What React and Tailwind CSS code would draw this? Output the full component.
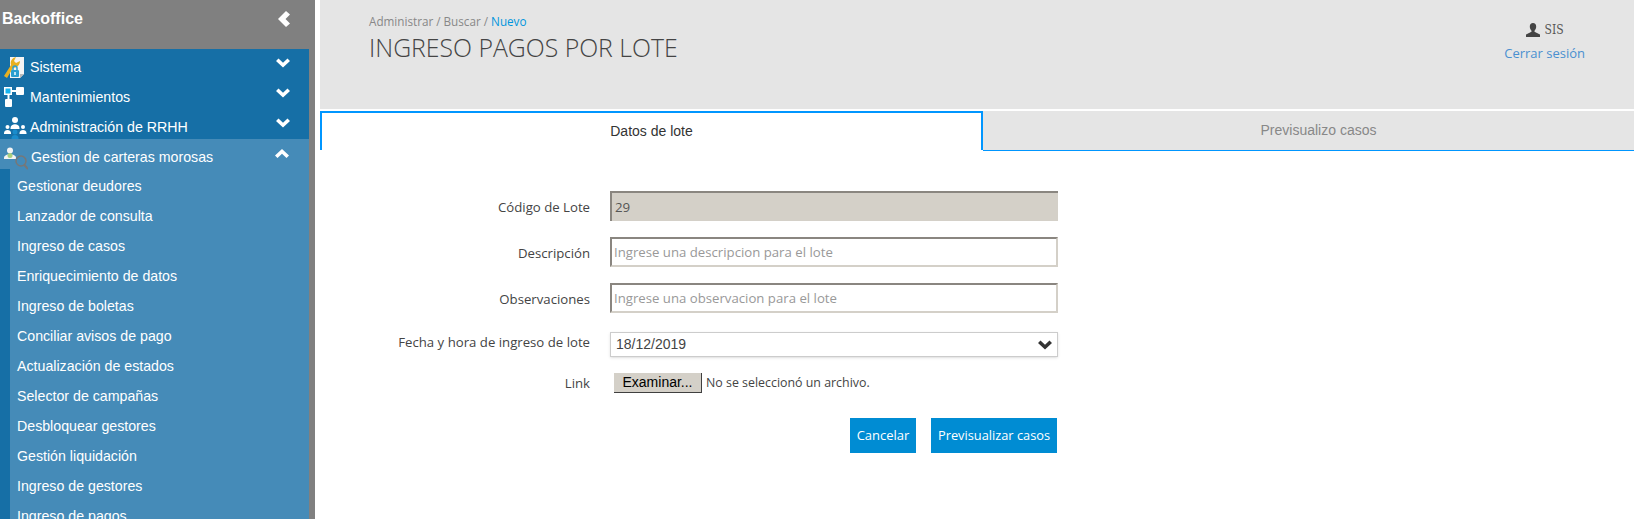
import React from 'react';

const modules = [
  { name: 'Sistema', icon: 'sistema' },
  { name: 'Mantenimientos', icon: 'mant' },
  { name: 'Administración de RRHH', icon: 'rrhh' },
];

const subItems = [
  'Gestionar deudores',
  'Lanzador de consulta',
  'Ingreso de casos',
  'Enriquecimiento de datos',
  'Ingreso de boletas',
  'Conciliar avisos de pago',
  'Actualización de estados',
  'Selector de campañas',
  'Desbloquear gestores',
  'Gestión liquidación',
  'Ingreso de gestores',
  'Ingreso de pagos',
];

function Chevron({ up, className }) {
  return (
    <svg viewBox="0 0 14 10" className={className} fill="currentColor">
      {up ? <path d="M7 0 14 6.5 11.5 9 7 4.8 2.5 9 0 6.5Z" /> : <path d="M7 9.5 0 3 2.5.5 7 4.7 11.5.5 14 3Z" />}
    </svg>
  );
}

function ModuleIcon({ type }) {
  if (type === 'sistema') {
    return (
      <svg viewBox="0 0 20 22" className="w-[20px] h-[22px]">
        <path d="M6 0h14v17l-4 4H6Z" fill="#f4f4f4" />
        <path d="M16 21l4-4h-4Z" fill="#b8b8b8" />
        <path d="M0 19 7 8C6 4 8 1 12 0L10 4l2 2 4-2c0 4-3 7-7 7L3 21Z" fill="#e8b020" />
        <rect x="7" y="13" width="8" height="7" rx="1" fill="#2a9fd0" />
        <path d="M9 13v-2a2 2 0 0 1 4 0v2" fill="none" stroke="#2a9fd0" strokeWidth="1.5" />
        <rect x="10" y="15" width="2" height="3" fill="#bfe6f5" />
      </svg>
    );
  }
  if (type === 'mant') {
    return (
      <svg viewBox="0 0 20 20" className="w-[20px] h-[20px]">
        <path d="M8 4h5M4.5 8v5" stroke="#fff" strokeWidth="2" />
        <rect x="0" y="0" width="8" height="8" fill="#fff" />
        <rect x="1.5" y="1.5" width="5" height="5" fill="#18b4ee" />
        <rect x="12" y="0" width="8" height="8" rx="1" fill="#fff" />
        <rect x="1" y="12" width="7" height="8" rx="1" fill="#fff" />
      </svg>
    );
  }
  if (type === 'rrhh') {
    return (
      <svg viewBox="0 0 23 22" className="w-[23px] h-[22px]">
        <circle cx="11" cy="3" r="3" fill="#fff" />
        <path d="M6.5 11c0-5 9-5 9 0v1h-9Z" fill="#fff" />
        <circle cx="3.5" cy="10" r="2" fill="#fff" />
        <path d="M0 16c0-4 7-4 7 0v1H0Z" fill="#fff" />
        <circle cx="19" cy="10" r="2" fill="#fff" />
        <path d="M15.5 16c0-4 7-4 7 0v1h-7Z" fill="#fff" />
        <circle cx="11" cy="15" r="2.5" fill="#1a8ccc" />
        <path d="M7.5 21c0-4 7-4 7 0v1h-7Z" fill="#1a8ccc" />
      </svg>
    );
  }
  return (
    <svg viewBox="0 0 24 23" className="w-[24px] h-[23px]">
      <circle cx="6" cy="3.5" r="3" fill="#f4f4f4" />
      <path d="M0 11c0-5 12-5 12 0v1H0Z" fill="#f4f4f4" />
      <circle cx="6" cy="8.5" r="2.5" fill="#a8d080" />
      <circle cx="17" cy="14" r="5" fill="none" stroke="#777" strokeWidth="1.5" />
      <path d="M20.5 18l3.5 4" stroke="#777" strokeWidth="2" />
    </svg>
  );
}

function Sidebar() {
  return (
    <aside className="w-[315px] shrink-0 h-[519px] bg-[#808080] overflow-hidden font-['Liberation_Sans',sans-serif] text-white">
      <div className="h-[49px] flex items-start justify-between pl-[2px] pr-[25px] pt-[8px]">
        <span className="text-[16px] font-bold leading-[21px]">Backoffice</span>
        <svg viewBox="0 0 12 16" className="w-[12px] h-[18px] mt-[2px]" fill="#fff">
          <path d="M0 8 8 0l4 3.5L7.5 8l4.5 4.5L8 16Z" />
        </svg>
      </div>
      <div className="w-[309px] bg-[#166fa6]">
        {modules.map((m) => (
          <div key={m.name} className="h-[30px] flex items-start relative">
            <div className="w-[30px] pl-[4px] pt-[8px]">
              <ModuleIcon type={m.icon} />
            </div>
            <span className="text-[14.2px] leading-[30px] mt-[3px]">{m.name}</span>
            <Chevron className="absolute right-[19px] top-[9px] w-[14px] h-[10px]" />
          </div>
        ))}
        <div className="bg-[#458bb8]">
          <div className="h-[30px] flex items-start relative">
            <div className="w-[31px] pl-[4px] pt-[8px]">
              <ModuleIcon type="gestion" />
            </div>
            <span className="text-[14.2px] leading-[30px] mt-[3px]">Gestion de carteras morosas</span>
            <Chevron up className="absolute right-[20px] top-[10px] w-[14px] h-[10px]" />
          </div>
          <div className="border-l-[10px] border-[#166fa6] pl-[7px]">
            {subItems.map((s) => (
              <div key={s} className="h-[30px] text-[14.2px] leading-[34px]">{s}</div>
            ))}
          </div>
        </div>
      </div>
    </aside>
  );
}

function Field({ label, labelClass = '', children }) {
  return (
    <div className="flex items-center">
      <label className={`w-[290px] text-right text-[13.2px] text-[#444] pr-[20px] ${labelClass}`}>{label}</label>
      {children}
    </div>
  );
}

export default function App() {
  return (
    <div className="flex h-[519px] overflow-hidden bg-white font-['Open_Sans',sans-serif]">
      <Sidebar />
      <main className="flex-1 ml-[5px] min-w-0">
        <header className="h-[109px] bg-[#e5e5e5] flex justify-between pl-[49px] pr-[49px]">
          <div className="pt-[13px]">
            <div className="text-[11.7px] leading-[16px] text-[#888]">
              Administrar / Buscar / <span className="text-[#0095dd]">Nuevo</span>
            </div>
            <h1 className="text-[24.8px] font-light leading-[33px] mt-[2px] text-[#444]">INGRESO PAGOS POR LOTE</h1>
          </div>
          <div className="pt-[22px] flex flex-col items-center">
            <div className="flex items-center gap-[5px] text-[#555]">
              <svg viewBox="0 0 14 14" className="w-[14px] h-[14px]" fill="#444">
                <path d="M7 0c2 0 3.2 1.500 3.2 3.500 0 2-1 3.500-1.700 4.200v1.100L14 11.500V14H0v-2.500l5.500-2.700V7.700C4.800 7 3.800 5.500 3.800 3.500 3.800 1.500 5 0 7 0Z" />
              </svg>
              <span className="font-['DejaVu_Serif_Condensed','DejaVu_Serif',serif] text-[12px] leading-[16px]">SIS</span>
            </div>
            <a className="text-[13px] leading-[18px] mt-[6px] text-[#4a90d0]">Cerrar sesión</a>
          </div>
        </header>
        <div className="flex mt-[2px] h-[40px] font-['Liberation_Sans',sans-serif] text-[14px]">
          <div className="w-[663px] h-[39px] border-t-2 border-l-2 border-r-2 border-[#0096ff] flex items-center justify-center text-[#333]">
            Datos de lote
          </div>
          <div className="flex-1 bg-[#e5e5e5] border-b border-[#0096ff] flex items-center justify-center pl-[20px] text-[#888]">
            Previsualizo casos
          </div>
        </div>
        <form className="mt-[40px]">
          <div className="flex flex-col gap-[16px]">
            <Field label="Código de Lote" labelClass="mt-[3px]">
              <div className="w-[448px] h-[30px] bg-[#d4d0c8] border-2 border-b-0 border-r-0 border-[#8a8680] text-[13.3px] text-[#555] pl-[3px] leading-[28px]">29</div>
            </Field>
            <Field label="Descripción" labelClass="mt-[3px]">
              <input placeholder="Ingrese una descripcion para el lote" className="w-[448px] h-[30px] bg-white border-2 border-t-[#8a8680] border-l-[#8a8680] border-r-[#d4d0c8] border-b-[#d4d0c8] text-[13.2px] pl-[2px] outline-none placeholder:text-[#999]" />
            </Field>
            <Field label="Observaciones" labelClass="mt-[3px]">
              <input placeholder="Ingrese una observacion para el lote" className="w-[448px] h-[30px] bg-white border-2 border-t-[#8a8680] border-l-[#8a8680] border-r-[#d4d0c8] border-b-[#d4d0c8] text-[13.2px] pl-[2px] outline-none placeholder:text-[#999]" />
            </Field>
          </div>
          <div className="mt-[19px]">
            <Field label="Fecha y hora de ingreso de lote" labelClass="mb-[4px]">
              <div className="w-[448px] h-[25px] border border-[#ccc] shadow-sm flex items-center justify-between pl-[5px] pr-[5px] text-[14px] text-[#444] font-['Liberation_Sans',sans-serif]">
                18/12/2019
                <Chevron className="w-[14px] h-[10px] text-[#333]" />
              </div>
            </Field>
          </div>
          <div className="mt-[16px]">
            <Field label="Link" labelClass="mt-[1px]">
              <div className="flex items-center pl-[4px]">
                <div className="h-[20px] w-[88px] bg-[#d4d0c8] border-b border-r border-[#404040] text-[14px] text-black text-center leading-[19px] font-['Liberation_Sans',sans-serif]">Examinar...</div>
                <span className="ml-[4px] text-[12.4px] text-[#444]">No se seleccionó un archivo.</span>
              </div>
            </Field>
          </div>
          <div className="w-[737px] flex justify-end gap-[15px] mt-[24px]">
            <button type="button" className="w-[66px] h-[35px] bg-[#008cd3] text-white text-[13px]">Cancelar</button>
            <button type="button" className="w-[126px] h-[35px] bg-[#008cd3] text-white text-[12.8px]">Previsualizar casos</button>
          </div>
        </form>
      </main>
    </div>
  );
}
